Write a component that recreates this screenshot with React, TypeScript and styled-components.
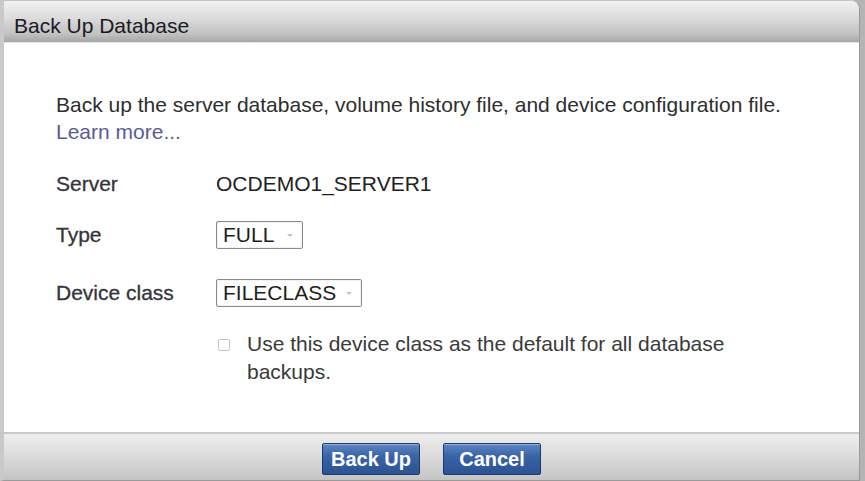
import React from "react";
import styled, { createGlobalStyle } from "styled-components";

const Global = createGlobalStyle`
  html, body { margin: 0; padding: 0; background: #b4b4b4; }
  body { font-family: "Liberation Sans", Arial, sans-serif; }
`;

const Dialog = styled.div`
  width: 860px;
  height: 481px;
  box-sizing: border-box;
  display: flex;
  flex-direction: column;
  background: #d6d6d6;
  border: 1px solid #9a9a9a;
  border-top-color: #c4c4c4;
  border-left: 4px solid #c9c9c9;
  border-radius: 0 9px 0 0;
  overflow: hidden;
`;

const TitleBar = styled.div`
  height: 41px;
  flex: 0 0 auto;
  box-sizing: border-box;
  display: flex;
  align-items: center;
  padding: 9px 0 0 10px;
  background: linear-gradient(#f2f2f2 0%, #dcdcdc 40%, #c2c2c2 80%, #a6a6a6 100%);
  color: #1a1a24;
  font-size: 21px;
`;

const Body = styled.div`
  flex: 1 1 auto;
  background: #ffffff;
  padding: 48px 0 0 52px;
  color: #2e2e2e;
  font-size: 21px;
  border-top: 1px solid #e6e6e6;
`;

const Description = styled.p`
  margin: 0;
  line-height: 27px;
`;

const LearnMore = styled.a`
  color: #595c93;
  text-decoration: none;
`;

const Row = styled.div<{ $top: number }>`
  display: flex;
  align-items: center;
  margin-top: ${(p) => p.$top}px;
  height: 30px;
`;

const Label = styled.div`
  width: 160px;
  color: #34343a;
  -webkit-text-stroke: 0.3px #34343a;
`;

const Value = styled.div`
  color: #222;
`;

const Select = styled.div<{ $w: number }>`
  width: ${(p) => p.$w}px;
  height: 28px;
  box-sizing: border-box;
  border: 1px solid #8a8a8a;
  border-radius: 2px;
  display: flex;
  align-items: center;
  justify-content: space-between;
  padding: 0 9px 0 6px;
  color: #1e1e1e;
  background: #fff;
  box-shadow: inset 0 0 0 1px #f2f2f2;
`;

const Caret = styled.span`
  width: 0;
  height: 0;
  border-left: 3px solid transparent;
  border-right: 3px solid transparent;
  border-top: 3px solid #c4c4c4;
`;

const CheckRow = styled.div`
  display: flex;
  align-items: flex-start;
  margin-top: 22px;
  margin-left: 162px;
`;

const CheckBox = styled.span`
  width: 10px;
  height: 10px;
  margin-top: 9px;
  border: 1px solid #c7c7c7;
  border-radius: 2px;
  flex: 0 0 auto;
`;

const CheckText = styled.div`
  margin-left: 17px;
  width: 500px;
  line-height: 28px;
  color: #3a3a3a;
`;

const Footer = styled.div`
  height: 48px;
  flex: 0 0 auto;
  box-sizing: border-box;
  border-top: 2px solid #c9c9c9;
  background: linear-gradient(#eeeeee 0%, #dadada 50%, #c4c4c4 100%);
  display: flex;
  justify-content: center;
  align-items: flex-start;
  padding: 9px 0 0 0;
  gap: 23px;
`;

const Button = styled.button`
  width: 98px;
  height: 32px;
  box-sizing: border-box;
  border: 1px solid #1f3868;
  border-radius: 2px;
  background: linear-gradient(#5f86c2 0%, #3a64a6 40%, #2c5393 100%);
  box-shadow: inset 0 1px 0 #8fb0de;
  color: #fff;
  font-family: "Liberation Sans", Arial, sans-serif;
  font-weight: 700;
  font-size: 20px;
  padding: 0;
  cursor: pointer;
`;

export default function App() {
  return (
    <>
      <Global />
      <Dialog>
        <TitleBar>Back Up Database</TitleBar>
        <Body>
          <Description>
            Back up the server database, volume history file, and device configuration file.
            <br />
            <LearnMore href="#">Learn more...</LearnMore>
          </Description>
          <Row $top={24}>
            <Label>Server</Label>
            <Value>OCDEMO1_SERVER1</Value>
          </Row>
          <Row $top={21}>
            <Label>Type</Label>
            <Select $w={87}>
              FULL <Caret />
            </Select>
          </Row>
          <Row $top={28}>
            <Label>Device class</Label>
            <Select $w={146}>
              FILECLASS <Caret />
            </Select>
          </Row>
          <CheckRow>
            <CheckBox />
            <CheckText>Use this device class as the default for all database backups.</CheckText>
          </CheckRow>
        </Body>
        <Footer>
          <Button>Back Up</Button>
          <Button>Cancel</Button>
        </Footer>
      </Dialog>
    </>
  );
}
